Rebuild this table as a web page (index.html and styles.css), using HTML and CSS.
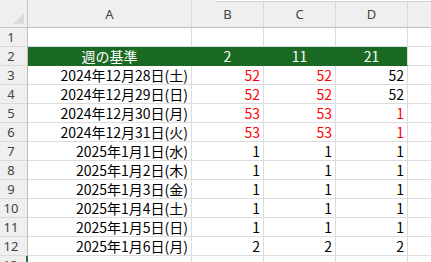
FILE: index.html
```html
<!DOCTYPE html>
<html lang="ja">
<head>
<meta charset="utf-8">
<title>週の基準</title>
<link rel="stylesheet" href="styles.css">
</head>
<body>
<div class="sheet">
  <div class="bar-edge"></div>
  <div class="grid">
    <div class="corner"><span class="corner-tri"></span></div>
    <div class="colhead">A</div>
    <div class="colhead">B</div>
    <div class="colhead">C</div>
    <div class="colhead">D</div>
    <div class="colhead"></div>

    <div class="rowhead">1</div>
    <div class="cell"></div><div class="cell"></div><div class="cell"></div><div class="cell"></div><div class="cell"></div>

    <div class="rowhead">2</div>
    <div class="cell hdr center">週の基準</div>
    <div class="cell hdr center">2</div>
    <div class="cell hdr center">11</div>
    <div class="cell hdr hdr-last center">21</div>
    <div class="cell"></div>

    <div class="rowhead">3</div>
    <div class="cell num">2024年12月28日(土)</div>
    <div class="cell num red">52</div><div class="cell num red">52</div><div class="cell num">52</div><div class="cell"></div>

    <div class="rowhead">4</div>
    <div class="cell num">2024年12月29日(日)</div>
    <div class="cell num red">52</div><div class="cell num red">52</div><div class="cell num">52</div><div class="cell"></div>

    <div class="rowhead">5</div>
    <div class="cell num">2024年12月30日(月)</div>
    <div class="cell num red">53</div><div class="cell num red">53</div><div class="cell num red">1</div><div class="cell"></div>

    <div class="rowhead">6</div>
    <div class="cell num">2024年12月31日(火)</div>
    <div class="cell num red">53</div><div class="cell num red">53</div><div class="cell num red">1</div><div class="cell"></div>

    <div class="rowhead">7</div>
    <div class="cell num">2025年1月1日(水)</div>
    <div class="cell num">1</div><div class="cell num">1</div><div class="cell num">1</div><div class="cell"></div>

    <div class="rowhead">8</div>
    <div class="cell num">2025年1月2日(木)</div>
    <div class="cell num">1</div><div class="cell num">1</div><div class="cell num">1</div><div class="cell"></div>

    <div class="rowhead">9</div>
    <div class="cell num">2025年1月3日(金)</div>
    <div class="cell num">1</div><div class="cell num">1</div><div class="cell num">1</div><div class="cell"></div>

    <div class="rowhead">10</div>
    <div class="cell num">2025年1月4日(土)</div>
    <div class="cell num">1</div><div class="cell num">1</div><div class="cell num">1</div><div class="cell"></div>

    <div class="rowhead">11</div>
    <div class="cell num">2025年1月5日(日)</div>
    <div class="cell num">1</div><div class="cell num">1</div><div class="cell num">1</div><div class="cell"></div>

    <div class="rowhead">12</div>
    <div class="cell num">2025年1月6日(月)</div>
    <div class="cell num">2</div><div class="cell num">2</div><div class="cell num">2</div><div class="cell"></div>

    <div class="rowhead rowhead-active">13</div>
    <div class="cell"></div><div class="cell"></div><div class="cell"></div><div class="cell"></div><div class="cell"></div>
  </div>
</div>
</body>
</html>
```

FILE: styles.css
```css
html, body {
  margin: 0;
  padding: 0;
  background: #ffffff;
}

.sheet {
  position: relative;
  width: 431px;
  height: 262px;
  overflow: hidden;
}

/* bottom edge of the formula bar peeking over the column headers */
.bar-edge {
  position: absolute;
  left: 215px;
  top: 0;
  right: 0;
  height: 1px;
  background: #ffffff;
  border-bottom: 1px solid #d4d4d4;
  z-index: 2;
}

.grid {
  display: grid;
  grid-template-columns: 28px 164px 72px 72px 72px 72px;
  grid-template-rows: 28px repeat(13, 19px);
  font-family: "Noto Sans CJK JP", "Noto Sans", sans-serif;
  font-size: 14px;
}

.grid > div {
  box-sizing: border-box;
  display: flex;
  align-items: center;
  white-space: nowrap;
  overflow: hidden;
}

.corner {
  background: #efefef;
  border-right: 1px solid #c4c4c4;
  border-bottom: 1px solid #c4c4c4;
  position: relative;
}

.corner-tri {
  position: absolute;
  left: 13px;
  top: 13px;
  width: 11px;
  height: 11px;
  background: #dadada;
  clip-path: polygon(100% 0, 100% 100%, 0 100%);
}

.colhead {
  background: #efefef;
  border-right: 1px solid #d9d9d9;
  border-bottom: 1px solid #bdbdbd;
  justify-content: center;
  color: #444444;
  font-family: "Noto Sans", sans-serif;
  font-size: 13px;
}

.rowhead {
  background: #efefef;
  border-right: 1px solid #bdbdbd;
  border-bottom: 1px solid #d9d9d9;
  justify-content: center;
  padding-right: 5px;
  color: #444444;
  font-family: "Noto Sans", sans-serif;
  font-size: 13px;
}

.rowhead-active {
  border-right: 2px solid #1e7145;
}

.cell {
  border-right: 1px solid #dcdcdc;
  border-bottom: 1px solid #dcdcdc;
  color: #000000;
  padding: 0 3px;
}

.num {
  justify-content: flex-end;
}

.center {
  justify-content: center;
}

.red {
  color: #ff0000;
}

.hdr {
  background: #1a6a23;
  color: #ffffff;
  border-right-color: #1a6a23;
  border-bottom-color: #1a6a23;
}

.hdr-last {
  border-right-color: #dcdcdc;
}
```
